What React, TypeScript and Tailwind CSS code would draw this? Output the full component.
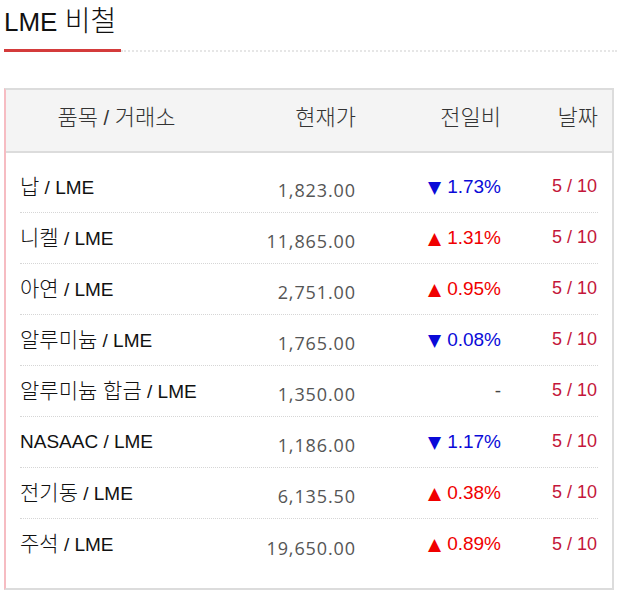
import React from 'react';

type Row = {
  name: string;
  price: string;
  dir: 'up' | 'down' | 'none';
  rate: string;
  date: string;
};

const rows: Row[] = [
  { name: '납', price: '1,823.00', dir: 'down', rate: '1.73%', date: '5 / 10' },
  { name: '니켈', price: '11,865.00', dir: 'up', rate: '1.31%', date: '5 / 10' },
  { name: '아연', price: '2,751.00', dir: 'up', rate: '0.95%', date: '5 / 10' },
  { name: '알루미늄', price: '1,765.00', dir: 'down', rate: '0.08%', date: '5 / 10' },
  { name: '알루미늄 합금', price: '1,350.00', dir: 'none', rate: '-', date: '5 / 10' },
  { name: 'NASAAC', price: '1,186.00', dir: 'down', rate: '1.17%', date: '5 / 10' },
  { name: '전기동', price: '6,135.50', dir: 'up', rate: '0.38%', date: '5 / 10' },
  { name: '주석', price: '19,650.00', dir: 'up', rate: '0.89%', date: '5 / 10' },
];

// korean glyphs in the source render a bit larger than the latin ones
const isKo = (s: string) => /[\uac00-\ud7a3]/.test(s);

function Rate({ dir, rate }: { dir: Row['dir']; rate: string }) {
  if (dir === 'none') {
    return <span className="text-[#444]">-</span>;
  }
  const up = dir === 'up';
  return (
    <span className={up ? 'text-[#f00000]' : 'text-[#0a0ad8]'}>
      <span className="[font-family:'DejaVu_Sans',sans-serif] text-[17px] mr-[6px]">{up ? '▲' : '▼'}</span>
      {rate}
    </span>
  );
}

export default function App() {
  return (
    <div className="w-[620px] h-[596px] bg-white [font-family:'Liberation_Sans','Noto_Sans_CJK_KR',sans-serif] text-[#111]">
      {/* title */}
      <div className="pl-[4px] pr-[3px]">
        <h2 className="pt-[7px] h-[37px] text-[26px] leading-[30px] font-normal">
          LME <span className="text-[28px] font-light">비철</span>
        </h2>
        <div className="mt-[12px] flex items-center">
          <div className="w-[117px] h-[3px] bg-[#d43b3b]" />
          <div className="flex-1 border-b-2 border-dotted border-[#e6e6e6]" />
        </div>
      </div>

      {/* table */}
      <div className="ml-[4px] mt-[36px] w-[610px] h-[502px] border-2 border-[#dcdcdc] border-l-[#f6bcc2] flex flex-col">
        <div className="h-[63px] bg-[#f4f4f4] border-b-2 border-[#dcdcdc] px-[14px] grid grid-cols-[193px_143px_145px_97px] items-center pb-[5px] text-[20px] leading-[28px] text-[#333] font-light">
          <div className="text-center">
            <span className="text-[22px]">품목</span> / <span className="text-[22px]">거래소</span>
          </div>
          <div className="text-right text-[22px]">현재가</div>
          <div className="text-right text-[22px]">전일비</div>
          <div className="text-right text-[22px]">날짜</div>
        </div>
        <div className="pt-[9px] px-[14px]">
          {rows.map((r, i) => (
            <div
              key={r.name}
              className={`h-[51px] grid grid-cols-[193px_143px_145px_97px] items-center ${
                i < rows.length - 1 ? 'border-b border-dotted border-[#d6d6d6]' : ''
              }`}
            >
              <div className="text-[19px] leading-[26px] font-light whitespace-nowrap">
                {isKo(r.name) ? <span className="text-[21px]">{r.name}</span> : r.name} / LME
              </div>
              <div className="text-right pt-[7px] [font-family:'Open_Sans',sans-serif] text-[18px] tracking-[0.9px] text-[#555]">
                {r.price}
              </div>
              <div className="text-right text-[19px]">
                <Rate dir={r.dir} rate={r.rate} />
              </div>
              <div className="text-right pr-[1px] pb-[1px] text-[18px] text-[#c4163a]">{r.date}</div>
            </div>
          ))}
        </div>
      </div>
    </div>
  );
}
